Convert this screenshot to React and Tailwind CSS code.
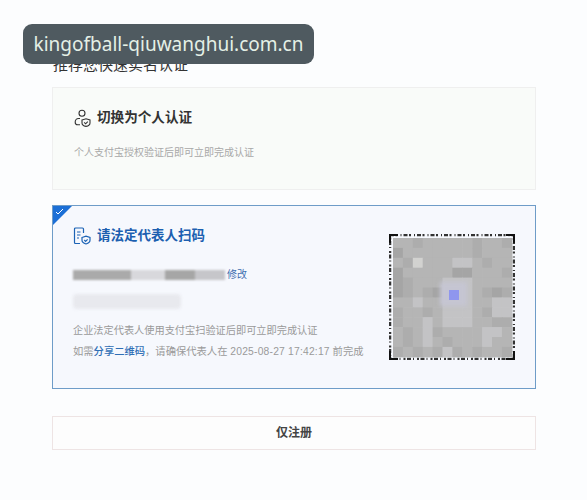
const mosaic = [
  "bbcbbbbbcbbc",
  "dbbbbbbbcbbb",
  "bcfbbbeebcbb",
  "dbbbbbddbbbc",
  "dcbbbeeebbbb",
  "dcbcdeeebcdc",
  "bbebbeeebbee",
  "cbbcbeeebcee",
  "cbbebeeebbcc",
  "bcbecbbbbeeb",
  "bcbebcbbbebb",
  "cbcbcecbcbbc",
]
const shades = { b: "#b5b5b5", c: "#adadad", d: "#a5a5a5", e: "#c3c3c5", f: "#d2d2d0" }

function PersonIcon() {
  return (
    <svg width="17" height="18" viewBox="0 0 17 18" fill="none" stroke="#333" strokeWidth="1.1">
      <circle cx="8" cy="4.2" r="3" />
      <path d="M6 9.5H4.5C2.5 9.5 1.2 11 1.2 13v.2c0 1.6 1 2.6 2.5 2.6H6" />
      <path d="M8 11l4-1.2 4 1.2v3c0 1.8-1.8 3-4 3.4-2.2-.4-4-1.6-4-3.4z" />
      <path d="M10.2 13.4l1.4 1.4 2.2-2.2" />
    </svg>
  )
}

function PhoneIcon() {
  return (
    <svg width="18" height="18" viewBox="0 0 18 18" fill="none" stroke="#1c63b5" strokeWidth="1.2">
      <path d="M7 16.5H2.5a1 1 0 0 1-1-1V2a1 1 0 0 1 1-1H9.5a1 1 0 0 1 1 1v4" />
      <path d="M4 5h3.5M4 8h3.5M4 11h2" />
      <path d="M9 10.5l4-1.3 4 1.3v2.8c0 1.9-1.8 3.100-4 3.700-2.200-.6-4-1.800-4-3.700z" />
      <path d="M11.300 13l1.300 1.300 2-2" />
    </svg>
  )
}

function BlurredQr() {
  return (
    <svg width="126" height="126" viewBox="0 0 126 126" className="shrink-0">
      <rect x="1" y="1" width="124" height="124" fill="none" stroke="#333" strokeWidth="2.500" strokeDasharray="4 1.500 2 3 1 2" />
      <path d="M1 9V1h8M117 1h8v8M125 117v8h-8M9 125H1v-8" fill="none" stroke="#111" strokeWidth="2" />
      <g className="blur-[0.7px]">
        {mosaic.map((row, y) =>
          row.split("").map((c, x) => (
            <rect key={`${x}-${y}`} x={4 + x * 9.900} y={4 + y * 9.900} width="10.500" height="10.500" fill={shades[c]} />
          ))
        )}
      </g>
      <rect x="51" y="48" width="27" height="24" fill="#c5c5d2" className="blur-[2px]" />
      <rect x="60" y="56" width="10" height="10" fill="#8f96ee" className="blur-[0.5px]" />
    </svg>
  )
}

export default function App() {
  return (
    <div className="relative h-[500px] w-[587px] overflow-hidden bg-[#fcfdfe] pl-[52px] pr-[51px] pt-[55px] font-['Liberation_Sans','Noto_Sans_CJK_SC',sans-serif]">
      <div className="absolute left-[23px] top-[24px] z-10 flex h-[40px] w-[291px] items-center justify-center rounded-[9px] bg-[#4f5a60] font-['Noto_Sans',sans-serif] text-[19px] text-[#e4f0e6]">
        kingofball-qiuwanghui.com.cn
      </div>

      <h1 className="ml-px text-[15px] leading-[20px] text-[#333]">推荐您快速实名认证</h1>

      <section className="mt-[12px] h-[103px] border border-[#efefef] bg-[#f9fbf9] px-[21px] pt-[20px]">
        <div className="flex items-center gap-[6px]">
          <PersonIcon />
          <span className="text-[13.600px] font-bold leading-[20px] text-[#333]">切换为个人认证</span>
        </div>
        <p className="mt-[18px] text-[10px] leading-[14px] text-[#a8a8a8]">个人支付宝授权验证后即可立即完成认证</p>
      </section>

      <section className="relative mt-[15px] flex h-[184px] items-start justify-between border border-[#6e9cc8] bg-[#f6f8fd] pl-[20px] pr-[20px] pt-[20px]">
        <div className="absolute left-0 top-0 h-[19px] w-[19px] bg-[#1c6fd6] [clip-path:polygon(0_0,100%_0,0_100%)]" />
        <svg width="9" height="7" viewBox="0 0 9 7" className="absolute left-[2px] top-[2px]" fill="none" stroke="#fff" strokeWidth="1">
          <path d="M1 4l2 2 5-5" />
        </svg>

        <div className="min-w-0">
          <div className="flex items-center gap-[6px]">
            <PhoneIcon />
            <span className="text-[13.500px] font-bold leading-[20px] text-[#1c5fb0]">请法定代表人扫码</span>
          </div>
          <div className="mt-[22px] flex items-center gap-[2px]">
            <div className="flex h-[10px] w-[152px] overflow-hidden blur-[1px]">
              <div className="w-[58px] bg-[#aaaaaa]" />
              <div className="w-[34px] bg-[#d8d8dc]" />
              <div className="w-[30px] bg-[#a6a6a6]" />
              <div className="w-[30px] bg-[#c6c6ca]" />
            </div>
            <span className="text-[10px] leading-[14px] text-[#3f6fb0]">修改</span>
          </div>
          <div className="mt-[12px] h-[15px] w-[108px] rounded bg-[#e8e9ee] blur-[1.500px]" />
          <p className="mt-[15px] text-[10.200px] leading-[14px] text-[#9a9a9a]">企业法定代表人使用支付宝扫验证后即可立即完成认证</p>
          <p className="mt-[7px] whitespace-nowrap text-[10.300px] leading-[14px] text-[#9a9a9a]">
            如需<span className="font-medium text-[#2f6fb5]">分享二维码</span>，请确保代表人在 <span className="tracking-[0.2px]">2025-08-27 17:42:17</span> 前完成
          </p>
        </div>

        <div className="mt-[8px]">
          <BlurredQr />
        </div>
      </section>

      <button className="mt-[27px] flex h-[34px] w-full items-center justify-center border border-[#eee4e4] bg-[#fdfdfd] text-[12px] font-bold text-[#444]">
        仅注册
      </button>
    </div>
  )
}
